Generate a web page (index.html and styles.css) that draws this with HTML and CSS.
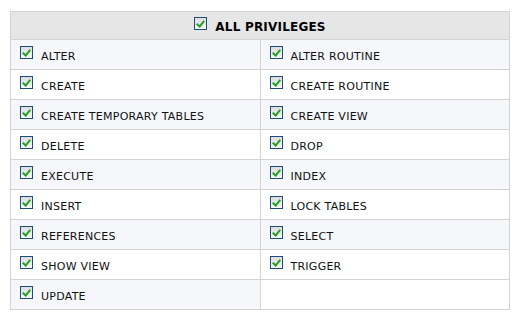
FILE: index.html
```html
<!DOCTYPE html>
<html lang="en">
<head>
  <meta charset="UTF-8" />
  <title>Privileges</title>
  <link rel="stylesheet" href="styles.css">
</head>
<body>
  <table class="privs">
    <tr class="head">
      <th colspan="2"><span class="cb"></span>ALL PRIVILEGES</th>
    </tr>
    <tr class="alt">
      <td><span class="cb"></span>ALTER</td>
      <td><span class="cb"></span>ALTER ROUTINE</td>
    </tr>
    <tr>
      <td><span class="cb"></span>CREATE</td>
      <td><span class="cb"></span>CREATE ROUTINE</td>
    </tr>
    <tr class="alt">
      <td><span class="cb"></span>CREATE TEMPORARY TABLES</td>
      <td><span class="cb"></span>CREATE VIEW</td>
    </tr>
    <tr>
      <td><span class="cb"></span>DELETE</td>
      <td><span class="cb"></span>DROP</td>
    </tr>
    <tr class="alt">
      <td><span class="cb"></span>EXECUTE</td>
      <td><span class="cb"></span>INDEX</td>
    </tr>
    <tr>
      <td><span class="cb"></span>INSERT</td>
      <td><span class="cb"></span>LOCK TABLES</td>
    </tr>
    <tr class="alt">
      <td><span class="cb"></span>REFERENCES</td>
      <td><span class="cb"></span>SELECT</td>
    </tr>
    <tr>
      <td><span class="cb"></span>SHOW VIEW</td>
      <td><span class="cb"></span>TRIGGER</td>
    </tr>
    <tr class="alt">
      <td><span class="cb"></span>UPDATE</td>
      <td class="empty"></td>
    </tr>
  </table>
</body>
</html>
```

FILE: styles.css
```css
body {
  margin: 0;
  padding: 11px 10px;
  background: #fff;
  font-family: "DejaVu Sans", Verdana, sans-serif;
  color: #000;
}
.privs {
  width: 500px;
  border-collapse: collapse;
  border: 1px solid #cfcfcf;
}
.privs th, .privs td {
  border: 1px solid #d3d3d3;
  height: 27px;
  padding: 2px 0 0;
}
.head th {
  height: 25px;
  background: #e6e6e6;
  font-size: 12px;
  font-weight: bold;
  text-align: center;
  letter-spacing: 0.2px;
}
.privs td {
  width: 50%;
  font-size: 11px;
  padding-left: 9px;
  letter-spacing: 0.25px;
  color: #111;
}
.alt td {
  background: #f6f7fb;
}
.alt td.empty {
  background: #fff;
}
.cb {
  display: inline-block;
  width: 11px;
  height: 11px;
  border: 1px solid #1f4d7a;
  background: linear-gradient(#dcdcdc, #f8f8f8);
  vertical-align: -1px;
  margin-right: 8px;
  position: relative;
  top: -2px;
}
.cb::after {
  content: "";
  position: absolute;
  left: 3px;
  top: 1px;
  width: 3px;
  height: 6px;
  border: solid #21a121;
  border-width: 0 2px 2px 0;
  transform: rotate(40deg);
}
```
